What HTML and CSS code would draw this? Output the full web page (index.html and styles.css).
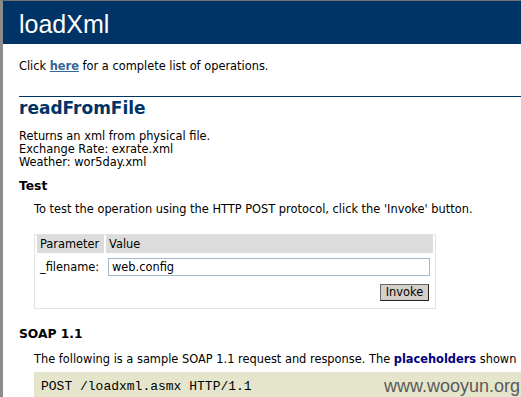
FILE: index.html
```html
<!DOCTYPE html>
<html>
<head>
<meta charset="utf-8">
<link rel="stylesheet" href="styles.css">
</head>
<body>
<div class="frame">
  <div class="heading1">loadXml</div>
  <div class="content">
    <p class="intro first">Click <a href="#">here</a> for a complete list of operations.</p>
    <h2>readFromFile</h2>
    <p class="intro desc">Returns an xml from physical file.<br>Exchange Rate: exrate.xml<br>Weather: wor5day.xml</p>
    <h3 class="test">Test</h3>
    <p class="text">To test the operation using the HTTP POST protocol, click the 'Invoke' button.</p>
    <table class="form">
      <tr>
        <td class="frmheader pcol">Parameter</td>
        <td class="frmheader">Value</td>
      </tr>
      <tr>
        <td class="frmtext">_filename:</td>
        <td><input class="frmInput" type="text" value="web.config"></td>
      </tr>
      <tr>
        <td></td>
        <td class="btncell"><button class="button">Invoke</button></td>
      </tr>
    </table>
    <h3 class="soap">SOAP 1.1</h3>
    <p class="text soaptext nowrap">The following is a sample SOAP 1.1 request and response. The <span class="ph">placeholders</span> shown</p>
    <pre class="code">POST /loadxml.asmx HTTP/1.1</pre>
  </div>
  <div class="watermark">www.wooyun.org</div>
</div>
</body>
</html>
```
FILE: styles.css
```css
html, body {
  margin: 0;
  padding: 0;
  background: #ffffff;
  overflow: hidden;
}
body {
  width: 521px;
  height: 397px;
  font-family: "DejaVu Sans", Verdana, sans-serif;
  color: #000000;
}
.frame {
  position: relative;
  height: 396px;
  border-top: 1px solid #6f6f6f;
  border-left: 3px solid #8c8c8c;
  overflow: hidden;
}
.heading1 {
  background: #003366;
  color: #ffffff;
  font-family: "Liberation Sans", Arial, sans-serif;
  font-size: 25px;
  line-height: 30px;
  height: 43px;
  box-sizing: border-box;
  padding: 8px 0 0 16px;
}
.content {
  padding-left: 31px;
  font-size: 11.4px;
  line-height: 13px;
}
p {
  margin: 0;
}
.intro {
  margin-left: -15px;
}
.first {
  margin-top: 16px;
}
a {
  color: #336699;
  font-weight: bold;
  text-decoration: underline;
}
h2 {
  margin: 23px 0 0 -15px;
  border-top: 1px solid #003366;
  color: #003366;
  font-size: 17px;
  line-height: 22px;
  font-weight: bold;
  padding-top: 0;
}
.desc {
  margin-top: 11px;
}
h3 {
  margin: 11px 0 0 -15px;
  font-size: 12.3px;
  line-height: 16px;
  font-weight: bold;
}
.test {
  margin-top: 9px;
}
.text {
  margin-top: 9px;
}
.soaptext {
  margin-top: 11px;
}
.nowrap {
  white-space: nowrap;
}
.ph {
  color: #000080;
  font-weight: bold;
}
.form {
  margin-top: 18px;
  width: 402px;
  border: 1px solid #e2e2e2;
  border-spacing: 2px 0;
  border-collapse: separate;
  padding: 0;
  font-size: 11.4px;
}
.form td {
  padding: 0 3px;
}
.frmheader {
  background: #dcdcdc;
  height: 18px;
}
.pcol {
  width: 64px;
}
.frmtext {
  height: 28px;
  vertical-align: middle;
}
.frmInput {
  display: block;
  box-sizing: border-box;
  width: 322px;
  height: 18px;
  margin: 0 0 0 -1px;
  padding: 0 3px;
  border: 1px solid #a5b9c9;
  font-family: "DejaVu Sans", Verdana, sans-serif;
  font-size: 11.4px;
  background: #fff;
  color: #000;
}
.btncell {
  text-align: right;
  padding-bottom: 5px !important;
  height: 22px;
}
.button {
  height: 17px;
  width: 49px;
  padding: 0;
  margin-right: 1px;
  background: #d4d0c8;
  border: 1px solid #222;
  border-top-color: #666;
  border-left-color: #666;
  font-family: "DejaVu Sans", Verdana, sans-serif;
  font-size: 11.4px;
  color: #000;
}
.soap {
  margin-top: 17px;
}
.code {
  margin: 6px 0 0 0;
  background: #e5e5cc;
  padding: 7px 7px;
  font-family: "Liberation Mono", "Courier New", monospace;
  font-size: 13px;
  line-height: 15px;
  height: 40px;
}
.watermark {
  position: absolute;
  right: 1px;
  bottom: 1px;
  font-family: "Liberation Sans", Arial, sans-serif;
  font-size: 18px;
  line-height: 20px;
  color: #5a5a5a;
}
```
